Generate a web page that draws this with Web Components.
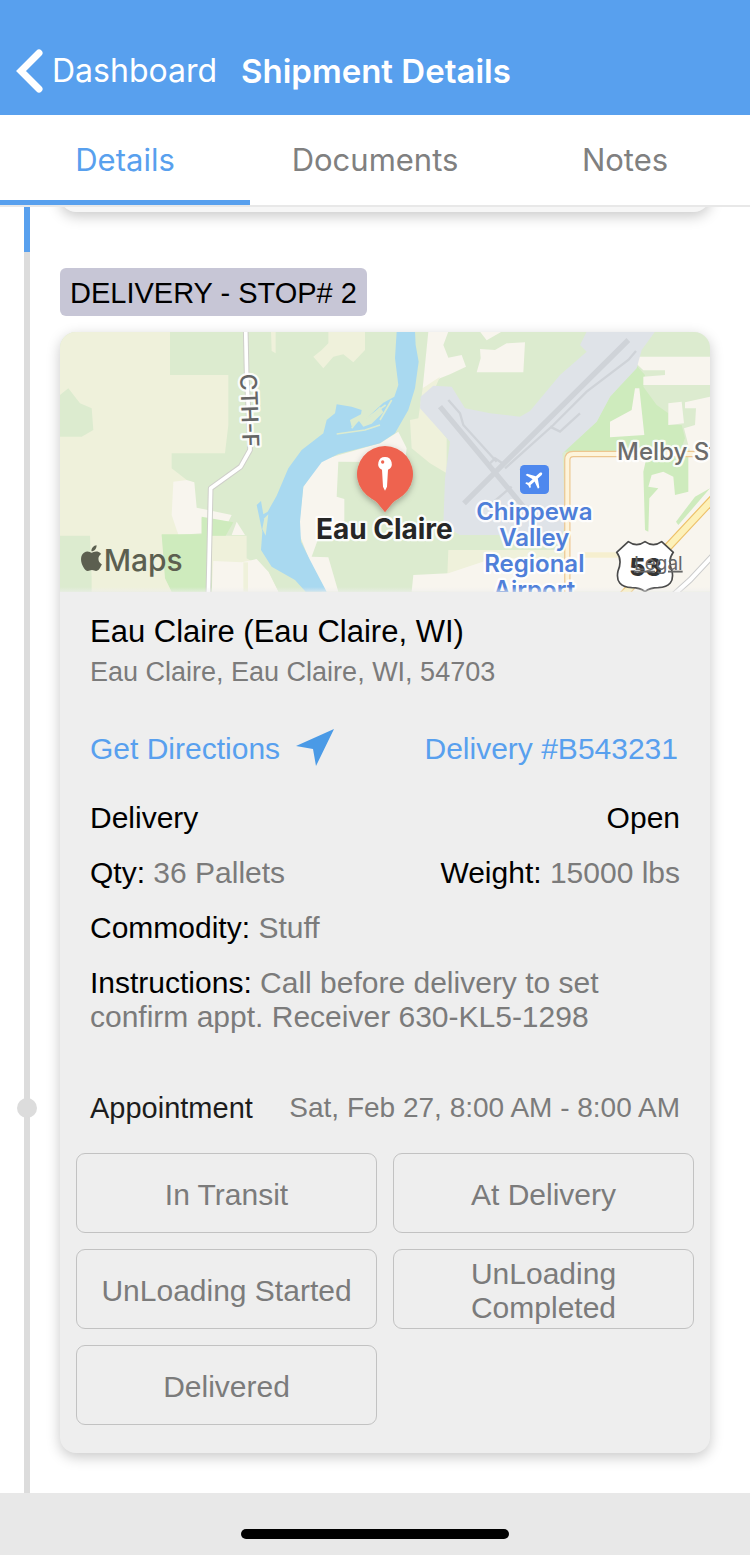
<!DOCTYPE html>
<html lang="en">
<head>
<meta charset="utf-8">
<meta name="viewport" content="width=device-width, initial-scale=1">
<title>Shipment Details</title>
<style>
  body {
    margin: 0;
    min-height: 100vh;
    display: flex;
    flex-direction: column;
    background: #fff;
    color: #000;
    font: 30px/34px "Liberation Sans", Arial, sans-serif;
    --blue: #58a0ee;
    --grey: #7b7b7b;
    --panel: #eeeeee;
    --ui: Inter, "Liberation Sans", sans-serif;
  }
  stop-timeline { flex: 1; }
</style>
</head>
<body>
<nav-header back="Dashboard">Shipment Details</nav-header>
<tab-bar>
  <tab-item selected>Details</tab-item>
  <tab-item>Documents</tab-item>
  <tab-item>Notes</tab-item>
</tab-bar>
<stop-timeline>
  <stop-entry done></stop-entry>
  <stop-entry label="DELIVERY - STOP# 2">
    <route-map></route-map>
    <stop-place name="Eau Claire (Eau Claire, WI)" address="Eau Claire, Eau Claire, WI, 54703"></stop-place>
    <stop-links reference="Delivery #B543231"></stop-links>
    <stop-facts></stop-facts>
    <stop-appointment when="Sat, Feb 27, 8:00 AM - 8:00 AM"></stop-appointment>
    <status-grid>
      <status-button>In Transit</status-button>
      <status-button>At Delivery</status-button>
      <status-button>UnLoading Started</status-button>
      <status-button>UnLoading Completed</status-button>
      <status-button>Delivered</status-button>
    </status-grid>
  </stop-entry>
</stop-timeline>
<home-bar></home-bar>

<script>
  class Part extends HTMLElement {
    connectedCallback() {
      if (this.shadowRoot) return;
      this.attachShadow({ mode: "open" }).innerHTML = this.view();
    }
    attr(name) { return this.getAttribute(name) || ""; }
  }

  customElements.define("nav-header", class extends Part {
    view() {
      return `<style>
        :host { display: block; background: var(--blue); color: #fff; font-family: var(--ui); }
        header { display: flex; align-items: center; gap: 24px; height: 89px; padding: 26px 16px 0; }
        a { display: flex; align-items: center; gap: 8px; color: inherit; text-decoration: none; font-size: 32px; line-height: 40px; }
        h1 { margin: 0; font-size: 33px; line-height: 40px; font-weight: 600; white-space: nowrap; }
        svg { width: 28px; height: 44px; }
      </style>
      <header>
        <a href="#dashboard"><svg viewBox="0 0 28 44" aria-hidden="true"><path d="M23 4 5 22 23 40" fill="none" stroke="#fff" stroke-width="7" stroke-linecap="round" stroke-linejoin="miter"/></svg><span>${this.attr("back")}</span></a>
        <h1><slot></slot></h1>
      </header>`;
    }
  });

  customElements.define("tab-bar", class extends Part {
    view() {
      return `<style>
        :host { display: block; border-bottom: 2px solid #e8e8e8; background: #fff; }
        nav { display: grid; grid-template-columns: repeat(3, 1fr); height: 90px; }
      </style><nav><slot></slot></nav>`;
    }
  });

  customElements.define("tab-item", class extends Part {
    view() {
      return `<style>
        :host { display: grid; }
        button { border: 0; margin: 0; padding: 0; background: none; color: #808080; font: 31px/40px var(--ui); }
        :host([selected]) button { color: var(--blue); box-shadow: inset 0 -5px var(--blue); }
      </style><button type="button"><slot></slot></button>`;
    }
  });

  customElements.define("stop-timeline", class extends Part {
    view() {
      return `<style>
        :host { display: flex; flex-direction: column; overflow: hidden; }
        ::slotted(:last-child) { flex: 1; }
      </style><slot></slot>`;
    }
  });

  customElements.define("stop-entry", class extends Part {
    view() {
      const done = this.hasAttribute("done");
      return `<style>
        :host { display: grid; grid-template-columns: 6px 1fr; gap: 30px; padding: 0 40px 0 24px; }
        .rail { position: relative; background: #dcdcdc; }
        .dot { position: absolute; left: -7px; top: 69%; width: 20px; height: 20px; margin-top: -10px; border-radius: 50%; background: #dcdcdc; }
        .body { padding: 16px 0 40px; }
        h2 { width: fit-content; box-sizing: border-box; margin: 0 0 16px; padding: 8px 10px 6px; border-radius: 6px; background: #c7c6d6; font-size: 29px; line-height: 34px; font-weight: 400; }
        .card { border-radius: 16px; background: var(--panel); box-shadow: 0 4px 14px rgba(0, 0, 0, .22); }
        :host([done]) .rail { background: var(--blue); }
        :host([done]) .body { padding: 0 0 40px; }
        :host([done]) .card { height: 45px; margin-top: -40px; background: #f6f6f6; }
      </style>
      <div class="rail">${done ? "" : `<div class="dot"></div>`}</div>
      <section class="body">${done ? "" : `<h2>${this.attr("label")}</h2>`}<div class="card"><slot></slot></div></section>`;
    }
  });

  customElements.define("route-map", class extends Part {
    view() {
      return `<style>
        :host { display: block; height: 260px; overflow: hidden; border-radius: 16px 16px 0 0; }
        svg { display: block; width: 100%; height: 100%; font-family: var(--ui); }
        .halo { paint-order: stroke; stroke: #fff; stroke-width: 14px; stroke-linejoin: round; stroke-opacity: .9; }
        a { fill: #666; text-decoration: underline; }
      </style>
      <svg viewBox="0 0 1950 780" preserveAspectRatio="xMidYMid slice" role="img" aria-label="Map of Eau Claire">
        <defs>
          <linearGradient id="fade" x1="0" y1="0" x2="0" y2="1"><stop offset="0" stop-color="#eee" stop-opacity="0"/><stop offset="1" stop-color="#eee" stop-opacity=".6"/></linearGradient>
          <filter id="drop" x="-30%" y="-30%" width="160%" height="160%"><feDropShadow dx="0" dy="8" stdDeviation="9" flood-opacity=".3"/></filter>
        </defs>
        <rect width="1950" height="780" fill="#dcebcf"/>
        <!-- west side: fields, county road and river -->
        <g transform="translate(-15 -21)">
          <path fill="#eff1db" d="M15 20H345V150H520V300L510 385H350V430L395 465 355 480V570L370 630H320L335 760 350 800H110V760L105 632H15V335L80 335 115 315 110 250 75 235 40 190 15 210Z"/>
          <path fill="#eff1db" d="M820 20H930V75L895 112 865 88 835 95 805 130 775 95 800 75 820 55ZM648 20H662V85L650 78ZM470 632H575V700L640 740 670 800H470Z"/>
          <path fill="#f8f5ee" d="M355 470 395 465 418 472 425 548 530 570 520 590 440 578V625L370 630 350 570ZM545 590 570 630H530ZM475 708 560 712 605 702 640 740 670 800H470Z"/>
          <path stroke="#eff1db" stroke-width="14" d="M572 712V800"/>
          <path fill="#ceebbd" d="M320 628H440V575L535 592 512 632H470V800H350L330 760Z"/>
          <path fill="#f8f5ee" d="M745 485 800 405 975 355 1030 320 1055 370 1050 412 850 410 845 515 868 522V640H790L770 695 820 697 850 800H800L730 620Z"/>
          <path fill="#a9d9f0" d="M1025 20H1080L1082 60 1091 110 1080 190 1060 255 1020 325 975 355 850 387 800 412 745 485 735 590 738 650 765 705 815 800H752L720 765 650 725 618 675 622 620 605 540 618 528 625 568 638 560 665 512 685 465 700 430 740 375 805 325 815 285 840 265 845 238 890 245 920 255 918 268 885 285 890 305 912 288 925 305 950 296 985 262 975 245 945 275 935 280 985 233 1018 215 1030 180 1020 100Z"/>
          <path fill="none" stroke="#dcebcf" stroke-width="5" d="M845 327 930 315 975 300M935 280 992 240M890 310 910 285M1010 225 975 285"/>
          <path fill="#dcebcf" d="M628 580 640 568 632 632 622 612Z"/>
          <path fill="none" stroke="#cfcfca" stroke-width="17" stroke-linejoin="round" d="M572 10 575 150 585 350V375L557 425 467 490 460 810"/>
          <path fill="none" stroke="#fff" stroke-width="11" stroke-linejoin="round" d="M572 10 575 150 585 350V375L557 425 467 490 460 810"/>
        </g>
        <!-- east side: airport, fields and highways -->
        <g transform="translate(960 -21)">
          <path fill="#f8f5ee" d="M145 20H205L190 60 205 98 245 90 258 125 210 148 180 160 150 180 128 190ZM300 72 345 75 380 55 435 52 430 142H290L302 100ZM300 20H365L320 46Z"/>
          <path fill="#eff1db" d="M128 190 180 155 165 190 120 240 200 340V445L150 415 95 370 90 285 115 280Z"/>
          <path fill="#eff1db" d="M205 675H560V800H200Z"/><path fill="#f8f5ee" d="M205 745 340 700H560V800H95L100 750Z"/>
          <path fill="#ceebbd" d="M770 122 795 150 790 185 830 240 865 265V300H905L915 340 900 380H550L545 400V385L650 290 690 215Z"/>
          <path fill="#f8f5ee" d="M775 95H990V180H790V155L855 150V136H790L765 112ZM690 290 755 255 765 190H778L793 330 690 337ZM865 235 905 230 912 295 865 300ZM915 232 990 215V380H930L912 310 945 300 948 250H915ZM570 390H990V800H570Z"/>
          <path fill="#dfe3e8" d="M122 215 160 182 215 185 255 250 330 265 420 275 450 258 540 150 620 80 600 60 620 20H825L785 75 770 130 690 215 650 290 548 385 555 600 545 630H240L190 600 195 460 210 350 120 250Z"/>
          <g fill="none" stroke="#cfd3d8">
            <path stroke-width="16" d="M180 245 430 545M745 45 252 535"/>
            <path stroke-width="7" d="M205 225 240 265 250 300 350 410M768 78 745 105 620 200 520 300 375 430M600 265 540 320 510 305M395 485 330 540M375 420 345 400 325 420"/>
          </g>
          <path fill="#ceebbd" d="M800 395H925V500L885 510 880 455 850 440 815 450 805 485 835 490 808 520 805 620 795 615 790 440ZM990 490 895 600 888 590 945 515Z"/>
          <path fill="none" stroke="#f6efcf" stroke-width="16" d="M740 800V700M600 690H720"/>
          <path fill="none" stroke="#edc68f" stroke-width="19" d="M562 810V405Q562 387 580 387H1000"/>
          <path fill="none" stroke="#fdf4db" stroke-width="12" d="M562 810V405Q562 387 580 387H1000"/>
          <path fill="none" stroke="#ccc" stroke-width="18" d="M1000 690 930 765 880 810"/><path fill="none" stroke="#fff" stroke-width="12" d="M1000 690 930 765 880 810"/>
          <path fill="none" stroke="#edc068" stroke-width="26" d="M1005 515 725 815"/><path fill="none" stroke="#fdf1b9" stroke-width="19" d="M1005 515 725 815"/>
          <rect x="420" y="420" width="87" height="87" rx="13" fill="#4e88ee"/>
          <path fill="#fff" transform="translate(464 463) rotate(48) scale(2.9) translate(-11.5 -12)" d="M21 16v-2l-8-5V3.500c0-.83-.67-1.500-1.500-1.500S10 2.670 10 3.500V9l-8 5v2l8-2.500V19l-2 1.500V22l3.500-1 3.500 1v-1.500L13 19v-5.500l8 2.500z"/>
          <g class="halo" fill="#4f7fd9" font-size="72" font-weight="600" text-anchor="middle">
            <text x="463" y="585">Chippewa</text><text x="463" y="663">Valley</text><text x="463" y="741">Regional</text><text x="463" y="819">Airport</text>
          </g>
          <text class="halo" x="711" y="405" font-size="72" font-weight="500" fill="#6c6c6c">Melby St</text>
          <path fill="#fff" stroke="#4a4a4a" stroke-width="5" stroke-linejoin="round" d="M745 650Q770 668 795 650Q820 668 845 650L880 682Q862 705 876 738Q886 785 835 788Q810 788 795 800Q780 788 755 788Q704 785 714 738Q728 705 710 682Z"/>
          <text x="797" y="753" font-size="75" font-weight="800" fill="#333" text-anchor="middle">53</text>
          <a href="#legal"><text x="908" y="734" font-size="57" text-anchor="end">Legal</text></a>
        </g>
        <g transform="translate(-15 -21)">
          <text class="halo" transform="translate(559 257) rotate(88)" font-size="69" font-weight="500" fill="#666" text-anchor="middle">CTH-F</text>
          <g fill="#5c5f50"><path transform="translate(71 661) scale(3.200)" d="M12.152 6.896c-.948 0-2.415-1.078-3.960-1.040-2.040.027-3.910 1.183-4.961 3.014-2.117 3.675-.546 9.103 1.519 12.090 1.013 1.454 2.208 3.090 3.792 3.039 1.520-.065 2.090-.987 3.935-.987 1.831 0 2.350.987 3.960.948 1.637-.026 2.676-1.480 3.676-2.948 1.156-1.688 1.636-3.325 1.662-3.415-.039-.013-3.182-1.221-3.220-4.857-.026-3.040 2.480-4.494 2.597-4.559-1.429-2.090-3.623-2.324-4.390-2.376-2-.156-3.675 1.090-4.610 1.090zM15.530 3.830c.843-1.012 1.400-2.427 1.245-3.830-1.207.052-2.662.805-3.532 1.818-.780.896-1.454 2.338-1.273 3.714 1.338.104 2.715-.688 3.559-1.701"/>
          <text x="146" y="738" font-size="90" font-weight="500">Maps</text></g>
          <g filter="url(#drop)"><path fill="#ee6450" d="M990 562 968 535Q962 527 950 521A84 84 0 1 1 1030 521Q1018 527 1012 535Z"/></g>
          <path fill="#fff" d="M990 396a20 20 0 0 1 9 38L996 485 990 497 984 485 981 434a20 20 0 0 1 9-38Z"/><circle cx="983" cy="411" r="5" fill="#ee6450"/>
          <text class="halo" x="988" y="642" font-size="84" font-weight="700" fill="#262626" text-anchor="middle">Eau Claire</text>
        </g>
        <rect y="765" width="1950" height="15" fill="url(#fade)"/>
      </svg>`;
    }
  });

  customElements.define("stop-place", class extends Part {
    view() {
      return `<style>
        :host { display: block; padding: 22px 30px 0; }
        h3 { margin: 0 0 5px; font-size: 31px; line-height: 36px; font-weight: 400; }
        p { margin: 0; color: var(--grey); font-size: 27px; line-height: 34px; }
      </style><h3>${this.attr("name")}</h3><p>${this.attr("address")}</p>`;
    }
  });

  customElements.define("stop-links", class extends Part {
    view() {
      return `<style>
        :host { display: flex; justify-content: space-between; align-items: center; padding: 43px 32px 0 30px; }
        a { display: flex; gap: 16px; align-items: center; height: 34px; color: var(--blue); text-decoration: none; }
        svg { width: 38px; height: 40px; }
      </style>
      <a href="#directions">Get Directions<svg viewBox="0 0 38 40" aria-hidden="true"><path fill="#4a9ae6" d="M38 0 20 37 17 20 0 17Z"/></svg></a>
      <a href="#reference">${this.attr("reference")}</a>`;
    }
  });

  customElements.define("stop-facts", class extends Part {
    view() {
      return `<style>
        :host { display: grid; gap: 21px; padding: 35px 30px 0; }
        div { display: flex; justify-content: space-between; }
        p { margin: 0; }
        span { color: var(--grey); }
      </style>
      <div><p>Delivery</p><p>Open</p></div>
      <div><p>Qty: <span>36 Pallets</span></p><p>Weight: <span>15000 lbs</span></p></div>
      <p>Commodity: <span>Stuff</span></p>
      <p>Instructions: <span>Call before delivery to set confirm appt. Receiver 630-KL5-1298</span></p>`;
    }
  });

  customElements.define("stop-appointment", class extends Part {
    view() {
      return `<style>
        :host { display: flex; justify-content: space-between; padding: 57px 30px 0; font-size: 28px; color: #1c1c1c; }
        b { font-size: 29px; font-weight: 400; }
        time { color: var(--grey); }
      </style><b>Appointment</b><time>${this.attr("when")}</time>`;
    }
  });

  customElements.define("status-grid", class extends Part {
    view() {
      return `<style>
        :host { display: grid; grid-template-columns: 1fr 1fr; grid-auto-rows: 80px; gap: 16px; padding: 28px 16px; }
      </style><slot></slot>`;
    }
  });

  customElements.define("status-button", class extends Part {
    view() {
      return `<style>
        :host { display: grid; }
        button { margin: 0; padding: 3px 20px 0; border: 1px solid #c2c2c2; border-radius: 9px; background: none; color: var(--grey); font: inherit; }
      </style><button type="button"><slot></slot></button>`;
    }
  });

  customElements.define("home-bar", class extends Part {
    view() {
      return `<style>
        :host { display: flex; justify-content: center; padding: 36px 0 16px; background: #e8e8e8; }
        div { width: 268px; height: 10px; border-radius: 5px; background: #000; }
      </style><div></div>`;
    }
  });
</script>
</body>
</html>
